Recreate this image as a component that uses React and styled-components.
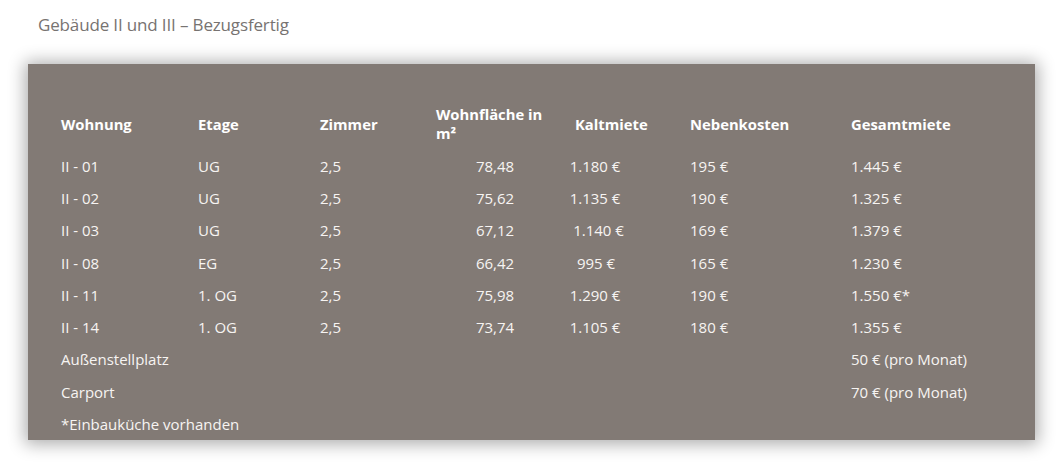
import React from "react";
import styled, { createGlobalStyle } from "styled-components";

const GlobalStyle = createGlobalStyle`
  html, body {
    margin: 0;
    padding: 0;
    background: #ffffff;
  }
  body {
    font-family: "Open Sans", "Noto Sans", "Liberation Sans", sans-serif;
  }
`;

const Page = styled.div`
  width: 1061px;
  height: 467px;
  padding: 13px 26px 0 28px;
  box-sizing: border-box;
`;

const Title = styled.h2`
  margin: 0 0 27px 10px;
  font-size: 17px;
  line-height: 24px;
  font-weight: 400;
  color: #777371;
  letter-spacing: -0.15px;
`;

const Panel = styled.div`
  background: #827a75;
  height: 376px;
  padding: 34px 0 0 33px;
  box-sizing: border-box;
  box-shadow: 0 1px 16px 3px rgba(0, 0, 0, 0.33);
`;

const Row = styled.div`
  display: grid;
  grid-template-columns: 137px 122px 116px 124px 130px 161px 1fr;
  align-items: center;
  height: ${(p) => (p.$head ? "52px" : "32.3px")};
  color: ${(p) => (p.$head ? "#ffffff" : "#f7f4f2")};
  font-size: ${(p) => (p.$head ? "14.8px" : "15px")};
  font-weight: ${(p) => (p.$head ? 700 : 400)};
  line-height: 19px;
`;

const Cell = styled.div`
  text-align: ${(p) => p.$align || "left"};
  padding-left: ${(p) => p.$pad || 0}px;
  padding-right: ${(p) => p.$padRight || 0}px;
  grid-column: ${(p) => p.$span || "auto"};
  white-space: nowrap;
`;

const HeadWrap = styled(Cell)`
  white-space: normal;
  width: 114px;
`;

const rows = [
  ["II - 01", "UG", "2,5", "78,48", "1.180 €", "195 €", "1.445 €", 0],
  ["II - 02", "UG", "2,5", "75,62", "1.135 €", "190 €", "1.325 €", 0],
  ["II - 03", "UG", "2,5", "67,12", "1.140 €", "169 €", "1.379 €", 7],
  ["II - 08", "EG", "2,5", "66,42", "995 €", "165 €", "1.230 €", 2],
  ["II - 11", "1. OG", "2,5", "75,98", "1.290 €", "190 €", "1.550 €*", 0],
  ["II - 14", "1. OG", "2,5", "73,74", "1.105 €", "180 €", "1.355 €", 0],
];

const App = () => {
  return (
    <Page>
      <GlobalStyle />
      <Title>Gebäude II und III – Bezugsfertig</Title>
      <Panel>
        <Row $head>
          <Cell>Wohnung</Cell>
          <Cell>Etage</Cell>
          <Cell>Zimmer</Cell>
          <HeadWrap>
            Wohnfläche in m²
          </HeadWrap>
          <Cell $pad={15}>Kaltmiete</Cell>
          <Cell>Nebenkosten</Cell>
          <Cell>Gesamtmiete</Cell>
        </Row>
        {rows.map((r) => (
          <Row key={r[0]}>
            <Cell>{r[0]}</Cell>
            <Cell>{r[1]}</Cell>
            <Cell>{r[2]}</Cell>
            <Cell $align="center" $padRight={6}>{r[3]}</Cell>
            <Cell $align="center" $padRight={60} $pad={r[7]}>{r[4]}</Cell>
            <Cell>{r[5]}</Cell>
            <Cell>{r[6]}</Cell>
          </Row>
        ))}
        <Row>
          <Cell $span="1 / 7">Außenstellplatz</Cell>
          <Cell>50 € (pro Monat)</Cell>
        </Row>
        <Row>
          <Cell $span="1 / 7">Carport</Cell>
          <Cell>70 € (pro Monat)</Cell>
        </Row>
        <Row>
          <Cell $span="1 / 8">*Einbauküche vorhanden</Cell>
        </Row>
      </Panel>
    </Page>
  );
};

export default App;
